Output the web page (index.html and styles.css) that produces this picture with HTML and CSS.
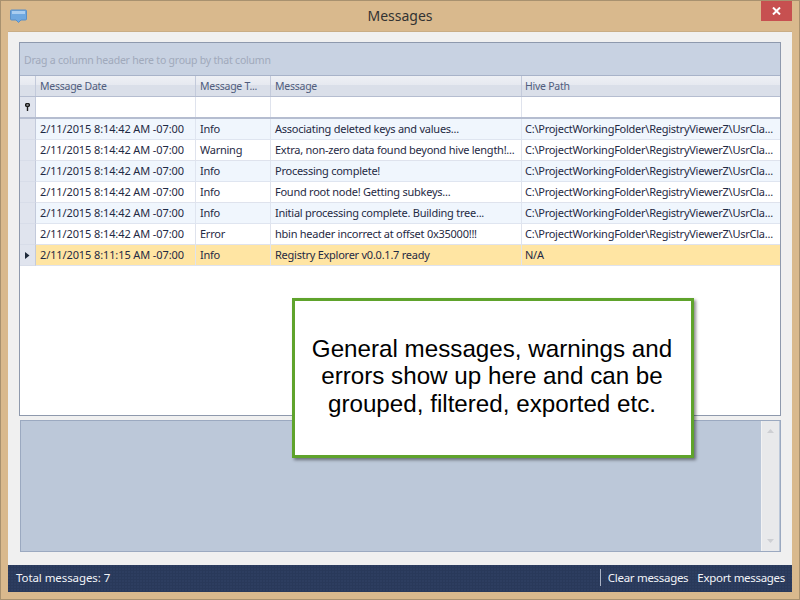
FILE: index.html
```html
<!DOCTYPE html>
<html lang="en">
<head>
<meta charset="utf-8">
<title>Messages</title>
<link rel="stylesheet" href="styles.css">
</head>
<body>
<div class="window">
  <header class="titlebar">
    <svg class="app-icon" width="17" height="14" viewBox="0 0 17 14"><path d="M1.500 1h14a1 1 0 0 1 1 1v8a1 1 0 0 1-1 1H11l-2.500 2.500L6 11H1.500a1 1 0 0 1-1-1V2a1 1 0 0 1 1-1z" fill="#6fa8e0" stroke="#5b8fc6"/><path d="M2 2h13v3H2z" fill="#a9cdf0"/></svg>
    <div class="title">Messages</div>
    <div class="close"><svg width="9" height="8" viewBox="0 0 9 8"><path d="M1 .5l7 7M8 .5l-7 7" stroke="#fff" stroke-width="2"/></svg></div>
  </header>
  <main class="body">
    <section class="grid">
      <div class="group-panel">Drag a column header here to group by that column</div>
      <div class="row head">
        <div class="ind"></div><div class="cell">Message Date</div><div class="cell">Message T...</div><div class="cell">Message</div><div class="cell">Hive Path</div>
      </div>
      <div class="row filter">
        <div class="ind"><svg width="5" height="8" viewBox="0 0 5 8"><path fill-rule="evenodd" d="M1 0h3l1 1v2L4 4H3.200v4H1.800V4H1L0 3V1zM1.500 1.500v1h2v-1z" fill="#1e1e1e"/></svg></div><div class="cell"></div><div class="cell"></div><div class="cell"></div><div class="cell"></div>
      </div>
      <div class="rows">
        <div class="row data alt"><div class="ind"></div><div class="cell">2/11/2015 8:14:42 AM -07:00</div><div class="cell">Info</div><div class="cell">Associating deleted keys and values...</div><div class="cell">C:\ProjectWorkingFolder\RegistryViewerZ\UsrCla...</div></div>
        <div class="row data"><div class="ind"></div><div class="cell">2/11/2015 8:14:42 AM -07:00</div><div class="cell">Warning</div><div class="cell">Extra, non-zero data found beyond hive length!...</div><div class="cell">C:\ProjectWorkingFolder\RegistryViewerZ\UsrCla...</div></div>
        <div class="row data alt"><div class="ind"></div><div class="cell">2/11/2015 8:14:42 AM -07:00</div><div class="cell">Info</div><div class="cell">Processing complete!</div><div class="cell">C:\ProjectWorkingFolder\RegistryViewerZ\UsrCla...</div></div>
        <div class="row data"><div class="ind"></div><div class="cell">2/11/2015 8:14:42 AM -07:00</div><div class="cell">Info</div><div class="cell">Found root node! Getting subkeys...</div><div class="cell">C:\ProjectWorkingFolder\RegistryViewerZ\UsrCla...</div></div>
        <div class="row data alt"><div class="ind"></div><div class="cell">2/11/2015 8:14:42 AM -07:00</div><div class="cell">Info</div><div class="cell">Initial processing complete. Building tree...</div><div class="cell">C:\ProjectWorkingFolder\RegistryViewerZ\UsrCla...</div></div>
        <div class="row data"><div class="ind"></div><div class="cell">2/11/2015 8:14:42 AM -07:00</div><div class="cell">Error</div><div class="cell">hbin header incorrect at offset 0x35000!!!</div><div class="cell">C:\ProjectWorkingFolder\RegistryViewerZ\UsrCla...</div></div>
        <div class="row data selected"><div class="ind"><svg width="5" height="7" viewBox="0 0 5 7"><path d="M0 0l4.500 3.500L0 7z" fill="#1e2a3a"/></svg></div><div class="cell">2/11/2015 8:11:15 AM -07:00</div><div class="cell">Info</div><div class="cell">Registry Explorer v0.0.1.7 ready</div><div class="cell">N/A</div></div>
      </div>
    </section>
    <section class="detail">
      <div class="scrollbar">
        <svg width="7" height="4" viewBox="0 0 7 4"><path d="M0 4L3.500 0 7 4z" fill="#cdcfd3"/></svg>
        <svg width="7" height="4" viewBox="0 0 7 4"><path d="M0 0L3.500 4 7 0z" fill="#cdcfd3"/></svg>
      </div>
    </section>
  </main>
  <footer class="status">
    <span class="total">Total messages: 7</span>
    <span class="sep"></span>
    <span class="action">Clear messages</span>
    <span class="action">Export messages</span>
  </footer>
  <div class="callout">General messages, warnings and errors show up here and can be grouped, filtered, exported etc.</div>
</div>
</body>
</html>
```
FILE: styles.css
```css
* { box-sizing: border-box; }
html, body { margin: 0; padding: 0; }
body { width: 800px; height: 600px; overflow: hidden; font-family: "Noto Sans", sans-serif; font-size: 11px; }
.window { position: relative; width: 800px; height: 600px; background: #d9b98d; border: 1px solid #a8916f; display: flex; flex-direction: column; padding: 0 7px 7px; }
.titlebar { height: 30px; flex: none; display: flex; align-items: flex-start; position: relative; }
.app-icon { margin: 8px 0 0 2px; }
.title { position: absolute; left: 0; right: 0; top: 5px; text-align: center; font-size: 14px; line-height: 19px; color: #333; }
.close { position: absolute; right: 0; top: 0; width: 31px; height: 20px; background: #c75050; display: flex; align-items: center; justify-content: center; }
.body { flex: 1; background: #f0f0f0; border-top: 1px solid #c9ad85; padding: 10px 11px 13px; display: flex; flex-direction: column; gap: 4px; min-height: 0; }
.grid { height: 374px; flex: none; background: #fff; border: 1px solid #8e99ad; display: flex; flex-direction: column; }
.group-panel { height: 33px; flex: none; background: #c8d2e2; color: #a0a9bb; padding: 0 4px; font-size: 10.5px; letter-spacing: -.22px; line-height: 34px; border-bottom: 1px solid #a8b3c9; }
.row { display: grid; grid-template-columns: 16px 160px 75px 251px 1fr; flex: none; }
.ind { display: flex; align-items: center; justify-content: center; border-right: 1px solid #c3cadb; background: #e0e4ee; border-bottom: 1px solid #d8dde9; }
.cell { padding: 0 0 0 4px; white-space: nowrap; overflow: hidden; border-right: 1px solid #dfe3ed; border-bottom: 1px solid #dfe3ed; }
.cell:last-child { border-right: 0; padding-left: 3px; }
.head { height: 21px; background: linear-gradient(#eef0f5 0, #e6e9f0 45%, #dadfe9 46%, #dadfe9 100%); color: #505d7d; font-size: 10.5px; letter-spacing: -.25px; line-height: 20px; border-bottom: 1px solid #b5bdd0; }
.head .ind, .head .cell { background: none; border-bottom: 0; border-right-color: #c3cadb; }
.filter { height: 22px; border-bottom: 2px solid #b5bdd0; }
.filter .cell { border-bottom: 0; }
.filter .ind { border-bottom: 0; }
.data { height: 21px; line-height: 20px; color: #1f2a44; background: #fff; letter-spacing: -.25px; }
.data .cell:nth-child(2) { letter-spacing: -.11px; }
.data.alt { background: #f0f6fd; }
.data.selected { background: #ffe5a3; }
.data.alt .cell { border-color: #dfe5f0; }
.detail { height: 132px; flex: none; margin-left: 1px; background: #bcc8d9; border: 1px solid #9ba9c0; display: flex; justify-content: flex-end; }
.scrollbar { width: 18px; margin-right: 1px; background: #e8e9eb; border-left: 1px solid #f2f2f3; display: flex; flex-direction: column; justify-content: space-between; align-items: center; padding: 8px 0; }
.status { height: 27px; flex: none; background-color: #29395a; background-image: radial-gradient(circle at 1px 1px, #32436680 1px, transparent 1px); background-size: 3px 3px; color: #f2f4f8; display: flex; align-items: center; font-size: 11.5px; padding: 0 7px 2px 8px; }
.total { margin-right: auto; letter-spacing: -.08px; }
.sep { width: 1px; height: 17px; background: #aab3c4; margin-right: 7px; }
.action { letter-spacing: -.3px; }
.action + .action { margin-left: 9px; }
.callout { position: absolute; left: 291px; top: 297px; width: 402px; height: 160px; background: #fff; border: 3px solid #5fa32c; box-shadow: 2px 2px 3px rgba(0,0,0,.45); display: flex; align-items: center; text-align: center; font-family: "Liberation Sans", sans-serif; font-size: 24.2px; line-height: 27.5px; color: #000; padding: 0 15px 4px 13px; }
```
